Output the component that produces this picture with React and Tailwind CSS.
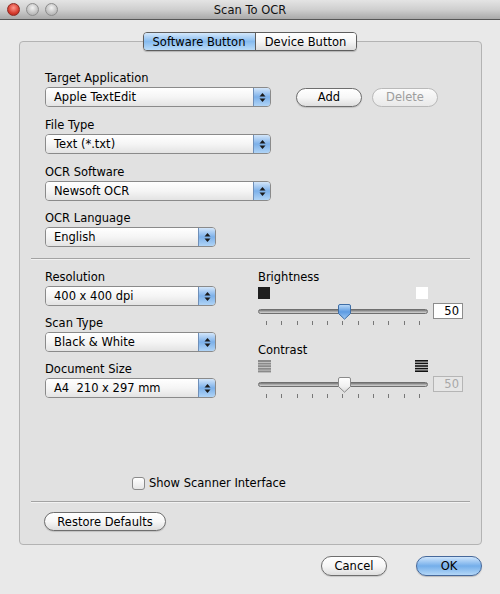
import React from "react";

function Arrows() {
  return (
    <svg width="7" height="11" viewBox="0 0 7 11">
      <path d="M3.5 1 L6.5 4.5 H0.5Z" fill="#1a1a1a" />
      <path d="M3.5 10 L6.5 6.5 H0.5Z" fill="#1a1a1a" />
    </svg>
  );
}

function Popup({ className, children }) {
  return (
    <div
      className={`flex h-[20px] items-stretch overflow-hidden rounded-[4px] border border-[#8a8a8a] ${className}`}
    >
      <div className="flex flex-1 items-center bg-gradient-to-b from-white via-[#f5f5f5] to-[#e3e3e3] pl-[8px] text-black">
        {children}
      </div>
      <div className="flex w-[17px] items-center justify-center border-l border-[#6f8fb8] bg-gradient-to-b from-[#d3e6fa] via-[#7cb0e9] to-[#b0d4f6]">
        <Arrows />
      </div>
    </div>
  );
}

function Pill({ className, children, disabled }) {
  return (
    <div
      className={`flex h-[19px] items-center justify-center rounded-full border ${
        disabled
          ? "border-[#b9b9b9] bg-gradient-to-b from-[#fbfbfb] to-[#e9e9e9] text-[#9d9d9d]"
          : "border-[#6e6e6e] bg-gradient-to-b from-white via-[#f7f7f7] to-[#dedede] text-black shadow-[0_1px_1px_rgba(0,0,0,0.15)]"
      } ${className}`}
    >
      {children}
    </div>
  );
}

function Knob({ blue }) {
  return (
    <svg width="13" height="16" viewBox="0 0 13 16" className="absolute left-[79px] top-[-6px]">
      <defs>
        <linearGradient id={blue ? "kb" : "kw"} x1="0" y1="0" x2="0" y2="1">
          {blue ? (
            <>
              <stop offset="0" stopColor="#bfdcf8" />
              <stop offset="0.5" stopColor="#5d9be2" />
              <stop offset="1" stopColor="#9fc9f3" />
            </>
          ) : (
            <>
              <stop offset="0" stopColor="#ffffff" />
              <stop offset="0.6" stopColor="#f0f0f0" />
              <stop offset="1" stopColor="#d8d8d8" />
            </>
          )}
        </linearGradient>
      </defs>
      <path
        d="M2 0.5 H11 A1.5 1.5 0 0 1 12.5 2 V9.5 L6.5 15.2 L0.5 9.5 V2 A1.5 1.5 0 0 1 2 0.5Z"
        fill={`url(#${blue ? "kb" : "kw"})`}
        stroke={blue ? "#3f6ea6" : "#8a8a8a"}
      />
    </svg>
  );
}

function Slider({ blue, disabled }) {
  return (
    <div className="flex h-[16px] items-center">
      <div className="relative h-[5px] w-[170px] rounded-full border border-[#6f6f6f] bg-gradient-to-b from-[#777] via-[#a9a9a9] to-[#d6d6d6]">
        <Knob blue={blue} />
      </div>
      <div
        className={`ml-[5px] flex h-[16px] w-[30px] items-center justify-end border pr-[3px] ${
          disabled
            ? "border-[#b5b5b5] bg-[#e6e6e6] text-[#a8a8a8]"
            : "border-[#8c8c8c] bg-white text-black"
        }`}
      >
        50
      </div>
    </div>
  );
}

function Ticks() {
  return (
    <div className="flex h-[4px] w-[170px] justify-between px-[8px]">
      {[0, 1, 2, 3, 4, 5, 6, 7, 8, 9, 10].map((i) => (
        <div key={i} className="h-[4px] w-px bg-[#777]" />
      ))}
    </div>
  );
}

function Lines({ dark }) {
  return (
    <svg width="13" height="13" viewBox="0 0 13 13">
      {[0, 1, 2, 3, 4].map((i) => (
        <rect
          key={i}
          x="0"
          y={i * 2.6}
          width="13"
          height={dark ? 1.6 : 2}
          fill={dark ? "#111" : "#8a8a8a"}
        />
      ))}
    </svg>
  );
}

export default function App() {
  return (
    <div className="h-[594px] w-[500px] overflow-hidden bg-[#e9e9e9] font-['Lucida_Grande','DejaVu_Sans',sans-serif] text-[11.5px] leading-[16px] text-black">
      {/* title bar */}
      <div className="relative flex h-[20px] items-center justify-center border-b border-[#565656] bg-gradient-to-b from-[#e4e4e4] via-[#cfcfcf] to-[#a9a9a9]">
        <div className="absolute left-[7px] top-[3px] flex gap-[6px]">
          <div className="h-[13px] w-[13px] rounded-full border border-[#8d2a22] bg-[radial-gradient(circle_at_50%_35%,#ff9a8f,#d63c2f_60%,#a52219)]" />
          <div className="h-[13px] w-[13px] rounded-full border border-[#8c8c8c] bg-[radial-gradient(circle_at_50%_35%,#f2f2f2,#c2c2c2_60%,#a5a5a5)]" />
          <div className="h-[13px] w-[13px] rounded-full border border-[#8c8c8c] bg-[radial-gradient(circle_at_50%_35%,#f2f2f2,#c2c2c2_60%,#a5a5a5)]" />
        </div>
        <span className="text-[#111]">Scan To OCR</span>
      </div>

      {/* tabs */}
      <div className="relative z-10 mt-[12px] flex justify-center pr-[1px]">
        <div className="flex h-[19px] overflow-hidden rounded-[4px] border border-[#5e5e5e] shadow-[0_1px_1px_rgba(0,0,0,0.2)]">
          <div className="flex w-[111px] items-center justify-center bg-gradient-to-b from-[#d4e8fb] via-[#86bbef] to-[#b9dbf8] text-black">
            Software Button
          </div>
          <div className="flex w-[101px] items-center justify-center border-l border-[#5e5e5e] bg-gradient-to-b from-white via-[#f5f5f5] to-[#dddddd] text-black">
            Device Button
          </div>
        </div>
      </div>

      {/* group box */}
      <div className="ml-[19px] mt-[-10px] flex h-[504px] w-[463px] flex-col rounded-[4px] border border-[#b3b3b3] bg-[#e1e1e1]">
        <div className="pl-[25px] pt-[28px]">
          <div className="h-[16px]">Target Application</div>
          <div className="mt-[1px] flex items-center">
            <Popup className="w-[226px]">Apple TextEdit</Popup>
            <Pill className="ml-[25px] w-[66px]">Add</Pill>
            <Pill className="ml-[10px] w-[66px]" disabled>
              Delete
            </Pill>
          </div>
          <div className="mt-[10px] h-[16px]">File Type</div>
          <Popup className="mt-[1px] w-[226px]">Text (*.txt)</Popup>
          <div className="mt-[10px] h-[16px]">OCR Software</div>
          <Popup className="mt-[1px] w-[226px]">Newsoft OCR</Popup>
          <div className="mt-[9px] h-[16px]">OCR Language</div>
          <Popup className="mt-[1px] w-[171px]">English</Popup>
        </div>

        <div className="mx-[11px] mt-[11px] h-[2px] border-t border-[#a3a3a3] bg-[#f2f2f2]" />

        <div className="flex pl-[25px] pt-[9px]">
          <div className="w-[171px]">
            <div className="h-[16px]">Resolution</div>
            <Popup className="mt-[1px] w-[171px]">400 x 400 dpi</Popup>
            <div className="mt-[9px] h-[16px]">Scan Type</div>
            <Popup className="mt-[1px] w-[171px]">Black &amp; White</Popup>
            <div className="mt-[9px] h-[16px]">Document Size</div>
            <Popup className="mt-[1px] w-[171px]">A4&nbsp; 210 x 297 mm</Popup>
          </div>
          <div className="ml-[42px] w-[205px]">
            <div className="h-[16px]">Brightness</div>
            <div className="mt-[2px] flex w-[170px] justify-between">
              <div className="h-[12px] w-[12px] bg-[#1e1e1e]" />
              <div className="h-[12px] w-[12px] bg-white" />
            </div>
            <div className="mt-[4px]">
              <Slider blue />
            </div>
            <div className="mt-[2px]">
              <Ticks />
            </div>
            <div className="mt-[17px] h-[16px]">Contrast</div>
            <div className="mt-[2px] flex w-[170px] justify-between">
              <Lines />
              <Lines dark />
            </div>
            <div className="mt-[3px]">
              <Slider disabled />
            </div>
            <div className="mt-[2px]">
              <Ticks />
            </div>
          </div>
        </div>

        <div className="ml-[112px] mt-[77px] flex h-[16px] items-center">
          <div className="h-[13px] w-[13px] rounded-[3px] border border-[#8a8a8a] bg-gradient-to-b from-white to-[#e6e6e6]" />
          <span className="ml-[4px]">Show Scanner Interface</span>
        </div>

        <div className="mx-[11px] mt-[10px] h-[2px] border-t border-[#a3a3a3] bg-[#f2f2f2]" />

        <Pill className="ml-[24px] mt-[9px] w-[122px]">Restore Defaults</Pill>
      </div>

      {/* bottom buttons */}
      <div className="mt-[11px] flex">
        <Pill className="ml-[321px] h-[20px] w-[66px]">Cancel</Pill>
        <div className="ml-[29px] flex h-[20px] w-[66px] items-center justify-center rounded-full border border-[#46689a] bg-gradient-to-b from-[#cfe5fb] via-[#74aeea] to-[#b3d7f7] text-black shadow-[0_1px_1px_rgba(0,0,0,0.2)]">
          OK
        </div>
      </div>
    </div>
  );
}
